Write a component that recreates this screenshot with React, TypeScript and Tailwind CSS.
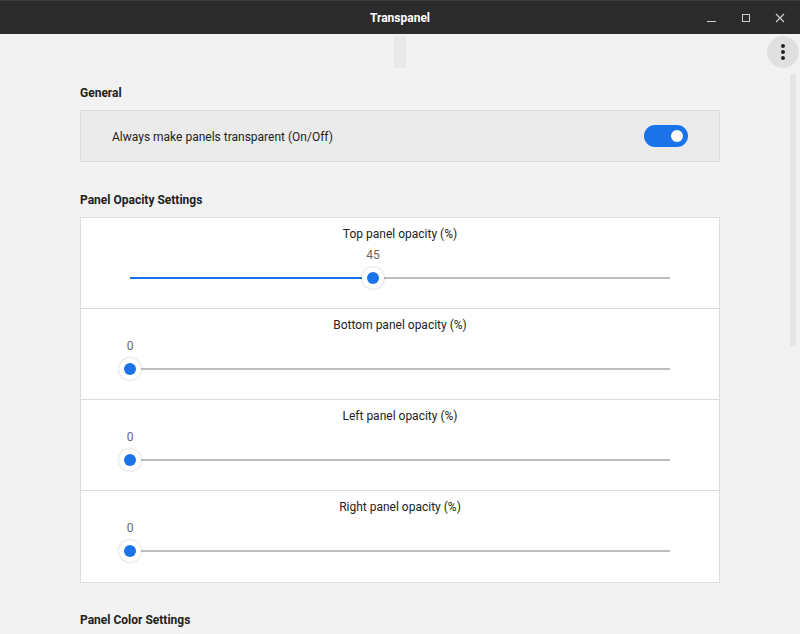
import { useState } from 'react'

const sliders = [
    { label: 'Top panel opacity (%)', value: 45 },
    { label: 'Bottom panel opacity (%)', value: 0 },
    { label: 'Left panel opacity (%)', value: 0 },
    { label: 'Right panel opacity (%)', value: 0 },
]

function Slider({ label, value }: { label: string; value: number }) {
    return (
        <div className="h-[91px] flex flex-col items-center pt-[7px]">
            <span className="text-[12px] leading-[18px] text-[#222222]">{label}</span>
            <div className="relative w-[540px] h-[18px] mt-[3px]">
                <span
                    className="absolute top-0 -translate-x-1/2 text-[12px] leading-[18px] text-[#666666]"
                    style={{ left: `${value}%` }}
                >
                    {value}
                </span>
            </div>
            <div className="relative w-[540px] h-[22px] mt-[3px] flex items-center">
                <div className="w-full h-[2px] bg-[#bdbdbd]" />
                <div className="absolute left-0 h-[2px] bg-[#1a73e8]" style={{ width: `${value}%` }} />
                <div
                    className="absolute w-[22px] h-[22px] -translate-x-1/2 rounded-full bg-white shadow-[0_0_2px_rgba(0,0,0,0.3)] flex items-center justify-center"
                    style={{ left: `${value}%` }}
                >
                    <div className="w-[12px] h-[12px] rounded-full bg-[#1a73e8]" />
                </div>
            </div>
        </div>
    )
}

export default function App() {
    const [on, setOn] = useState(true)

    return (
        <div className="w-[800px] h-[634px] overflow-hidden relative flex flex-col bg-[#f2f2f2] font-['Roboto',sans-serif]">
            {/* title bar */}
            <header className="h-[34px] shrink-0 bg-[#2b2b2b] border-t border-[#3a3a3a] flex items-center justify-center relative">
                <span className="text-white text-[12px] font-bold">Transpanel</span>
                <div className="absolute right-0 top-0 h-full flex items-center pr-[3px]">
                    <div className="w-[34px] h-full flex items-center justify-center">
                        <div className="w-[9px] h-[1.5px] bg-[#cfcfcf] mt-[8px] mr-[2px]" />
                    </div>
                    <div className="w-[34px] h-full flex items-center justify-center">
                        <div className="w-[8px] h-[8px] border border-[#cfcfcf]" />
                    </div>
                    <div className="w-[34px] h-full flex items-center justify-center">
                        <svg width="10" height="10" viewBox="0 0 10 10" stroke="#cfcfcf" strokeWidth="1.2">
                            <path d="M1 1L9 9M9 1L1 9" />
                        </svg>
                    </div>
                </div>
            </header>

            {/* menu button + scroll bar overlay */}
            <button className="absolute top-[36px] right-[1px] w-[32px] h-[32px] rounded-full bg-[#e0e0e0] flex flex-col items-center justify-center gap-[2px]">
                <span className="w-[4px] h-[4px] rounded-full bg-[#222]" />
                <span className="w-[4px] h-[4px] rounded-full bg-[#222]" />
                <span className="w-[4px] h-[4px] rounded-full bg-[#222]" />
            </button>
            <div className="absolute top-[74px] right-[4px] w-[6px] h-[272px] bg-[#e5e5e5]" />

            <main className="flex-1 flex flex-col px-[80px]">
                <div className="pt-[2px] flex justify-center">
                    <div className="w-[12px] h-[32px] rounded-[3px] bg-[#e8e8e8]" />
                </div>

                {/* General */}
                <h2 className="mt-[16px] text-[12px] leading-[18px] font-bold text-[#212121]">General</h2>
                <section className="mt-[8px] h-[52px] bg-[#ebebeb] border border-[#dcdcdc] flex items-center justify-between pl-[31px] pr-[31px]">
                    <span className="text-[12px] leading-[18px] pt-[1px] text-[#222222]">Always make panels transparent (On/Off)</span>
                    <button
                        onClick={() => setOn(!on)}
                        className="w-[44px] h-[22px] rounded-full bg-[#1a73e8] flex items-center justify-end pr-[5px]"
                    >
                        <span className="w-[12px] h-[12px] rounded-full bg-white" />
                    </button>
                </section>

                {/* Opacity */}
                <h2 className="mt-[29px] text-[12px] leading-[18px] font-bold text-[#212121]">Panel Opacity Settings</h2>
                <section className="mt-[8px] bg-white border border-[#dcdcdc] flex flex-col divide-y divide-[#dcdcdc]">
                    {sliders.map((s, idx) => (
                        <Slider key={idx} label={s.label} value={s.value} />
                    ))}
                </section>

                <h2 className="mt-[28px] text-[12px] leading-[18px] font-bold text-[#212121]">Panel Color Settings</h2>
            </main>
        </div>
    )
}
